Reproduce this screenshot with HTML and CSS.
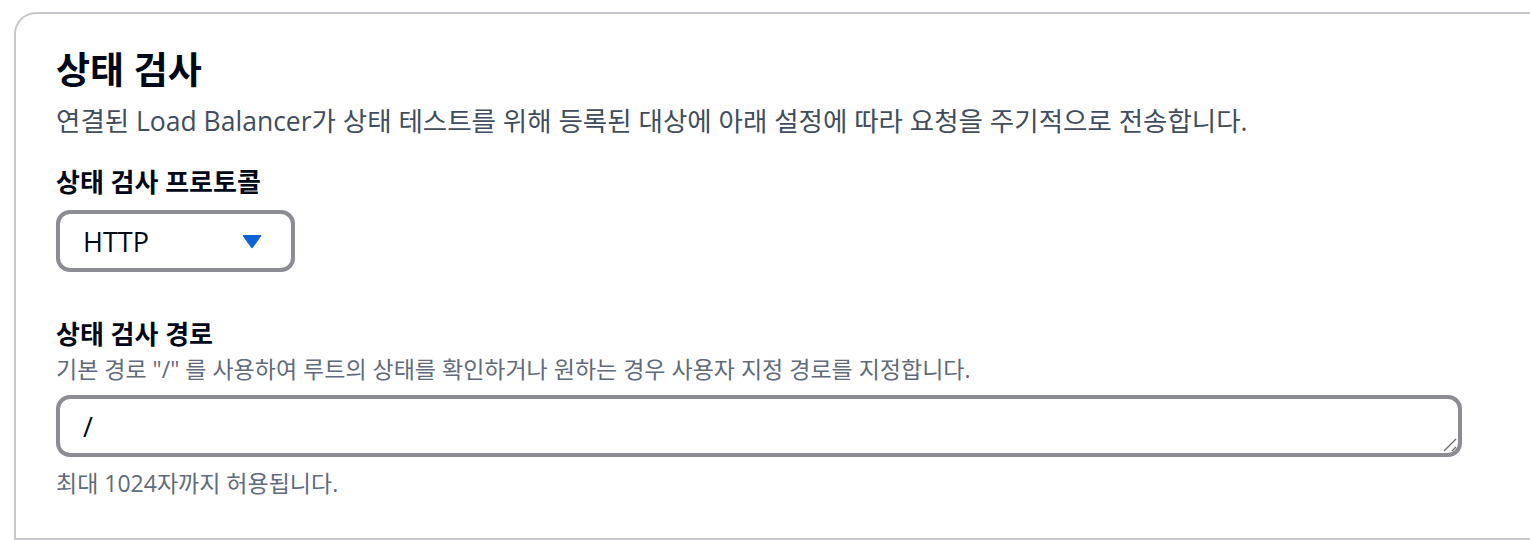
FILE: index.html
```html
<!DOCTYPE html>
<html lang="ko">
<head>
    <meta charset="UTF-8">
    <title>상태 검사</title>
    <link rel="stylesheet" href="styles.css">
</head>
<body>
    <div class="panel">
        <h2 class="panel-title">상태 검사</h2>
        <p class="panel-desc">연결된 Load Balancer가 상태 테스트를 위해 등록된 대상에 아래 설정에 따라 요청을 주기적으로 전송합니다.</p>

        <div class="field">
            <label class="field-label">상태 검사 프로토콜</label>
            <div class="select">
                <span>HTTP</span>
                <svg class="caret" width="20" height="15" viewBox="0 0 20 15"><path d="M1.5 1 H18.5 Q19.8 1 19 2.2 L11 13.6 Q10 15 9 13.6 L1 2.2 Q0.2 1 1.5 1 Z" fill="#0f62d6"/></svg>
            </div>
        </div>

        <div class="field field-path">
            <label class="field-label">상태 검사 경로</label>
            <p class="field-desc">기본 경로 "/" 를 사용하여 루트의 상태를 확인하거나 원하는 경우 사용자 지정 경로를 지정합니다.</p>
            <div class="textarea">
                <span>/</span>
                <svg class="grip" width="14" height="14" viewBox="0 0 14 14"><path d="M1 13 L13 1 M9 13 L13 9" stroke="#6b6b73" stroke-width="1.3"/></svg>
            </div>
            <p class="field-hint">최대 1024자까지 허용됩니다.</p>
        </div>
    </div>
</body>
</html>
```

FILE: styles.css
```css
body {
    margin: 0;
    padding: 12px 0 0 14px;
    background-color: #ffffff;
    font-family: "Open Sans", "Noto Sans CJK KR", sans-serif;
    color: #000716;
    overflow: hidden;
}
.panel {
    width: 1560px;
    height: 528px;
    box-sizing: border-box;
    border: 2px solid #c6c6cd;
    border-right: none;
    border-radius: 22px 0 0 0;
    padding: 36px 0 0 40px;
}
.panel-title {
    margin: 0;
    font-size: 37px;
    font-weight: 700;
    line-height: 40px;
}
.panel-desc {
    margin: 14px 0 0;
    font-size: 26.5px;
    line-height: 34px;
    color: #414d5c;
}
.field {
    margin-top: 28px;
}
.field-path {
    margin-top: 46px;
}
.field-label {
    display: block;
    font-size: 26px;
    font-weight: 700;
    line-height: 32px;
}
.select {
    margin-top: 12px;
    width: 239px;
    height: 62px;
    box-sizing: border-box;
    border: 4px solid #8c8c94;
    border-radius: 14px;
    display: flex;
    align-items: center;
    justify-content: space-between;
    padding: 0 29px 0 23px;
    font-size: 27px;
}
.field-desc {
    margin: 4px 0 0;
    font-size: 23px;
    line-height: 30px;
    color: #5f6b7a;
}
.textarea {
    position: relative;
    margin-top: 11px;
    width: 1406px;
    height: 62px;
    box-sizing: border-box;
    border: 4px solid #8c8c94;
    border-radius: 14px;
    display: flex;
    align-items: center;
    padding: 0 23px;
    font-size: 27px;
}
.grip {
    position: absolute;
    right: 1px;
    bottom: 1px;
}
.field-hint {
    margin: 11px 0 0;
    font-size: 23px;
    line-height: 30px;
    color: #5f6b7a;
}
```
